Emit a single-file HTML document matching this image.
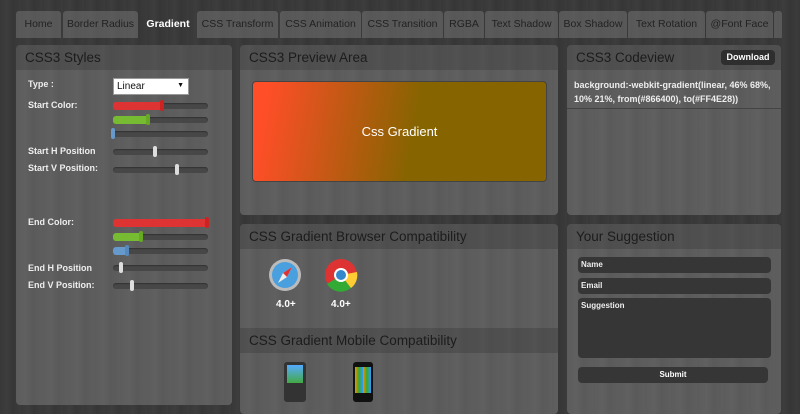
<!DOCTYPE html><html><head><style>
*{margin:0;padding:0;box-sizing:border-box}
body{width:800px;height:400px;overflow:hidden;position:relative;font-family:"Liberation Sans",sans-serif;background:repeating-linear-gradient(90deg,#383838 0,#3d3d3d 7px,#363636 13px,#3b3b3b 21px);white-space:nowrap}
.a{position:absolute}
.tab{position:absolute;top:11px;height:27px;background:rgba(120,120,120,.5);color:#222;font-size:10.5px;line-height:27px;text-align:center;border-radius:3px 3px 0 0}
.tab.on{background:transparent;color:#fff;font-weight:bold}
.pan{position:absolute;background:repeating-linear-gradient(90deg,#5c5c5c 0,#606060 9px,#5a5a5a 17px,#5e5e5e 26px);border-radius:4px}
.hd{position:absolute;left:0;right:0;top:0;height:25px;background:rgba(40,40,40,.25);font-size:13.5px;color:#1c1c1c;padding-left:9px;line-height:25px;border-radius:4px 4px 0 0}
.lb{position:absolute;left:28px;font-size:9px;font-weight:bold;color:#eee}
.tr{position:absolute;left:113px;width:95px;height:6px;background:#474747;border-radius:3px;box-shadow:inset 0 1px 1px #333}
.f{position:absolute;left:0;top:-1px;height:8px;border-radius:3px}
.k{position:absolute;top:-3px;width:4px;height:11px;border-radius:2px}
.in{position:absolute;left:578px;width:193px;background:#363636;border-radius:4px;color:#eee;font-size:8px;font-weight:bold;padding:3px 3px}
</style></head><body>
<div class="tab" style="left:16px;width:45px">Home</div>
<div class="tab" style="left:63px;width:75px">Border Radius</div>
<div class="tab on" style="left:140px;width:56px">Gradient</div>
<div class="tab" style="left:197px;width:81px">CSS Transform</div>
<div class="tab" style="left:280px;width:81px">CSS Animation</div>
<div class="tab" style="left:362px;width:81px">CSS Transition</div>
<div class="tab" style="left:444px;width:40px">RGBA</div>
<div class="tab" style="left:485px;width:73px">Text Shadow</div>
<div class="tab" style="left:559px;width:68px">Box Shadow</div>
<div class="tab" style="left:628px;width:77px">Text Rotation</div>
<div class="tab" style="left:706px;width:67px">@Font Face</div>
<div class="tab" style="left:774px;width:8px"></div>

<div class="pan" style="left:16px;top:45px;width:216px;height:360px"><div class="hd">CSS3 Styles</div></div>
<div class="lb" style="top:79px">Type :</div>
<div class="a" style="left:113px;top:78px;width:76px;height:17px;background:#fff;border:1px solid #999;font-size:10px;padding:2px 3px;color:#111">Linear<span style="position:absolute;right:4px;top:3px;font-size:7px">▼</span></div>
<div class="lb" style="top:100px">Start Color:</div>
<div class="tr" style="top:103px"><div class="f" style="width:50px;background:#d33"></div><div class="k" style="left:47px;background:#c22"></div></div>
<div class="tr" style="top:117px"><div class="f" style="width:36px;background:#7b3"></div><div class="k" style="left:33px;background:#6a2"></div></div>
<div class="tr" style="top:131px"><div class="k" style="left:-2px;background:#69c"></div></div>
<div class="lb" style="top:146px">Start H Position</div>
<div class="tr" style="top:149px"><div class="k" style="left:40px;background:#ddd"></div></div>
<div class="lb" style="top:163px">Start V Position:</div>
<div class="tr" style="top:167px"><div class="k" style="left:62px;background:#ddd"></div></div>
<div class="lb" style="top:217px">End Color:</div>
<div class="tr" style="top:220px"><div class="f" style="width:95px;background:#d33"></div><div class="k" style="left:92px;background:#c22"></div></div>
<div class="tr" style="top:234px"><div class="f" style="width:30px;background:#7b3"></div><div class="k" style="left:26px;background:#6a2"></div></div>
<div class="tr" style="top:248px"><div class="f" style="width:15px;background:#69c"></div><div class="k" style="left:12px;background:#58b"></div></div>
<div class="lb" style="top:263px">End H Position</div>
<div class="tr" style="top:265px"><div class="k" style="left:6px;background:#ddd"></div></div>
<div class="lb" style="top:280px">End V Position:</div>
<div class="tr" style="top:283px"><div class="k" style="left:17px;background:#ddd"></div></div>

<div class="pan" style="left:240px;top:45px;width:318px;height:170px"><div class="hd">CSS3 Preview Area</div></div>
<div class="a" style="left:252px;top:81px;width:295px;height:101px;border-radius:4px;border:1px solid #444;background:linear-gradient(100deg,#FF4E28 5%,#866400 55%);color:#fff;font-size:13px;text-align:center;line-height:99px">Css Gradient</div>

<div class="pan" style="left:567px;top:45px;width:214px;height:170px"><div class="hd">CSS3 Codeview</div>
<div class="a" style="left:154px;top:5px;width:54px;height:15px;background:#2e2e2e;border-radius:4px;color:#fff;font-size:9px;font-weight:bold;text-align:center;line-height:15px">Download</div>
<div class="a" style="left:0;right:0;top:63px;height:1px;background:#444"></div>
<div class="a" style="left:7px;top:33px;font-size:9px;font-weight:bold;color:#eee;line-height:14px">background:-webkit-gradient(linear, 46% 68%,<br>10% 21%, from(#866400), to(#FF4E28))</div></div>

<div class="pan" style="left:240px;top:224px;width:318px;height:190px"><div class="hd">CSS Gradient Browser Compatibility</div>
<div class="a" style="left:0;right:0;top:104px;height:25px;background:rgba(40,40,40,.25);font-size:13.5px;color:#1c1c1c;padding-left:9px;line-height:25px">CSS Gradient Mobile Compatibility</div></div>
<svg class="a" style="left:268px;top:258px" width="34" height="34"><circle cx="17" cy="17" r="16" fill="#bbb"/><circle cx="17" cy="17" r="13" fill="#4a9fdf"/><path d="M24 9 L15 15 L10 25 L19 19Z" fill="#eee"/><path d="M24 9 L19 19 L15 15Z" fill="#d33"/></svg>
<svg class="a" style="left:324px;top:258px" width="34" height="34"><circle cx="17" cy="17" r="16" fill="#d33"/><path d="M17 17 L3 26 A16 16 0 0 0 27 30Z" fill="#3a3"/><path d="M17 17 L27 30 A16 16 0 0 0 33 14Z" fill="#fc3"/><circle cx="17" cy="17" r="7" fill="#fff"/><circle cx="17" cy="17" r="5" fill="#38c"/></svg>
<div class="a" style="left:276px;top:299px;color:#fff;font-size:10px;font-weight:bold">4.0+</div>
<div class="a" style="left:331px;top:299px;color:#fff;font-size:10px;font-weight:bold">4.0+</div>
<div class="a" style="left:284px;top:362px;width:22px;height:40px;background:#333;border-radius:3px"><div style="margin:3px;height:18px;background:linear-gradient(#5af,#4a4)"></div></div>
<div class="a" style="left:353px;top:362px;width:20px;height:40px;background:#111;border-radius:3px"><div style="margin:5px 2px;height:26px;background:repeating-linear-gradient(90deg,#f80 0,#3a3 4px,#39f 8px)"></div></div>

<div class="pan" style="left:567px;top:224px;width:214px;height:190px"><div class="hd">Your Suggestion</div></div>
<div class="in" style="top:257px;height:16px">Name</div>
<div class="in" style="top:278px;height:16px">Email</div>
<div class="in" style="top:298px;height:60px">Suggestion</div>
<div class="a" style="left:578px;top:367px;width:190px;height:16px;background:#363636;border-radius:4px;color:#fff;font-size:8px;font-weight:bold;text-align:center;line-height:16px">Submit</div>
</body></html>
